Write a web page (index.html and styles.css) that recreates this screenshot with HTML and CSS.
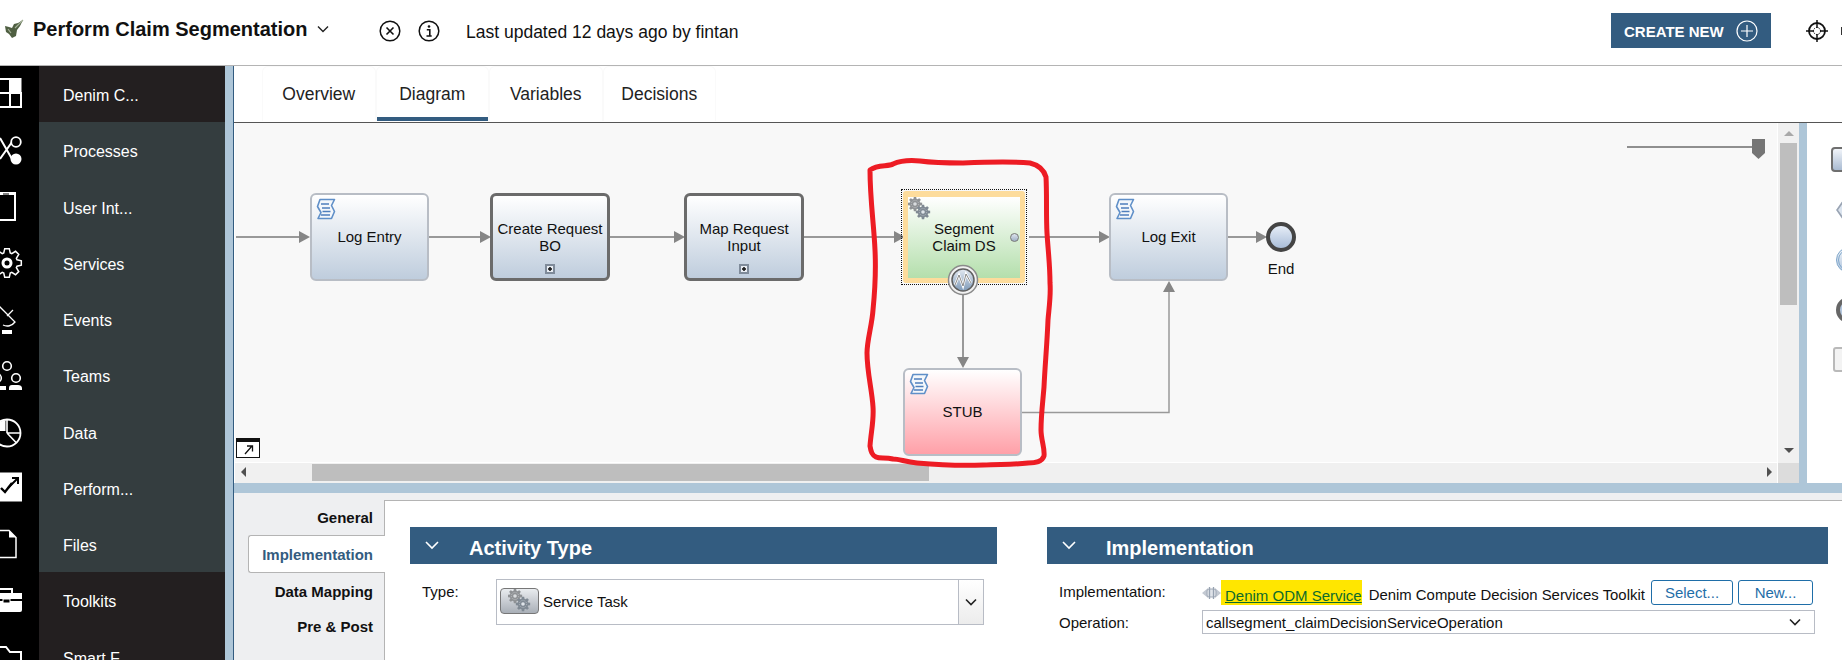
FILE: index.html
```html
<!DOCTYPE html>
<html>
<head>
    <meta charset="UTF-8">
    <title>Perform Claim Segmentation</title>
    <link rel="stylesheet" href="styles.css">
</head>
<body>

    <svg class="defs" width="0" height="0">
        <defs>
            <polygon id="cog" points="9.99,-3.24 14.32,-2.27 14.32,2.27 9.99,3.24 9.36,4.77 11.73,8.52 8.52,11.73 4.77,9.36 3.24,9.99 2.27,14.32 -2.27,14.32 -3.24,9.99 -4.77,9.36 -8.52,11.73 -11.73,8.52 -9.36,4.77 -9.99,3.24 -14.32,2.27 -14.32,-2.27 -9.99,-3.24 -9.36,-4.77 -11.73,-8.52 -8.52,-11.73 -4.77,-9.36 -3.24,-9.99 -2.27,-14.32 2.27,-14.32 3.24,-9.99 4.77,-9.36 8.52,-11.73 11.73,-8.52 9.36,-4.77"/>
            <g id="gears">
                <use href="#cog" transform="translate(7 7) scale(.5)" fill="#8f9295"/>
                <circle cx="7" cy="7" r="3.600" fill="none" stroke="#c4c7ca" stroke-width=".8" stroke-dasharray="1 1"/>
                <circle cx="7" cy="7" r="1.800" fill="#d9dcdf"/>
                <use href="#cog" transform="translate(15 15) scale(.5)" fill="#7f8993"/>
                <circle cx="15" cy="15" r="3.600" fill="none" stroke="#bcc3ca" stroke-width=".8" stroke-dasharray="1 1"/>
                <circle cx="15" cy="15" r="1.800" fill="#dfe4e9"/>
            </g>
            <g id="script">
                <path d="M4 1.500h14.500l-3 6 3 6-3 7H2l3-6-3.500-6z" fill="#f4f7fb" stroke="#5f8fc8" stroke-width="1.600" stroke-linejoin="round"/>
                <path d="M5 6h8M6 10h8M6.500 13.500h8M5 17h9" stroke="#4f7fbd" stroke-width="1.300" fill="none"/>
            </g>
        </defs>
    </svg>

    <header class="topbar">
        <div class="title-group">
            <svg class="logo" width="21" height="22" viewBox="0 0 21 22">
                <path d="M2 8l4 1 3 1 2-4 4-1 5-3-3 6-3 4-1 6-4 2-3-4-3-2z" fill="#4f5f42"/>
                <path d="M12 10l8-8M5 11l3 4" stroke="#a3b097" stroke-width="1.200" fill="none"/>
            </svg>
            <span class="app-title">Perform Claim Segmentation</span>
            <svg class="caret" width="12" height="8" viewBox="0 0 12 8"><path d="M1 1.500l5 5 5-5" fill="none" stroke="#222" stroke-width="1.400"/></svg>
        </div>
        <svg class="round-icon close-icon" width="22" height="22" viewBox="0 0 22 22">
            <circle cx="11" cy="11" r="9.800" fill="none" stroke="#111" stroke-width="1.500"/>
            <path d="M7.500 7.500l7 7M14.500 7.500l-7 7" stroke="#111" stroke-width="1.600"/>
        </svg>
        <svg class="round-icon info-icon" width="22" height="22" viewBox="0 0 22 22">
            <circle cx="11" cy="11" r="9.800" fill="none" stroke="#111" stroke-width="1.500"/>
            <circle cx="11" cy="6.500" r="1.300" fill="#111"/>
            <path d="M8.800 9.800h3v6M8.500 16h5.200" fill="none" stroke="#111" stroke-width="1.600"/>
        </svg>
        <span class="last-updated">Last updated 12 days ago by fintan</span>
        <button class="create-new">
            <span>CREATE NEW</span>
            <svg width="22" height="22" viewBox="0 0 22 22">
                <circle cx="11" cy="11" r="10" fill="none" stroke="#fff" stroke-width="1.200"/>
                <path d="M11 5v12M5 11h12" stroke="#fff" stroke-width="1.200"/>
            </svg>
        </button>
        <svg class="target-icon" width="22" height="22" viewBox="0 0 22 22">
            <circle cx="11" cy="11" r="8" fill="none" stroke="#111" stroke-width="1.800"/>
            <circle cx="11" cy="11" r="3.500" fill="none" stroke="#111" stroke-width="1" stroke-dasharray="1.500 1"/>
            <path d="M11 0v8M11 14v8M0 11h8M14 11h8" stroke="#111" stroke-width="1.500"/>
        </svg>
        <span class="edge-glyph"></span>
    </header>

    <div class="main">
        <div class="rail">
            <div class="rail-item"><svg width="39" height="56" viewBox="0 0 39 56">
                <path d="M-8 13h18v14H-8zM-8 27h18v14H-8zM10 27h11v14H10z" fill="none" stroke="#fff" stroke-width="2"/>
                <rect x="10.500" y="12" width="11" height="14" fill="#fff"/>
            </svg></div>
            <div class="rail-item"><svg width="39" height="56" viewBox="0 0 39 56">
                <path d="M0 16l12 21M0 37l12-17" stroke="#fff" stroke-width="2" fill="none"/>
                <circle cx="16" cy="20" r="4.800" fill="#000" stroke="#fff" stroke-width="1.800"/>
                <circle cx="16" cy="37" r="5.500" fill="#fff"/>
            </svg></div>
            <div class="rail-item"><svg width="39" height="56" viewBox="0 0 39 56">
                <rect x="-8" y="14" width="23" height="27" fill="none" stroke="#fff" stroke-width="2"/>
                <path d="M-8 15h23" stroke="#fff" stroke-width="2"/>
                <path d="M3 15h6" stroke="#000" stroke-width="1"/>
            </svg></div>
            <div class="rail-item"><svg width="39" height="56" viewBox="0 0 39 56">
                <use href="#cog" transform="translate(7 28)" fill="none" stroke="#fff" stroke-width="1.500"/>
                <circle cx="7" cy="28" r="4" fill="none" stroke="#fff" stroke-width="3"/>
            </svg></div>
            <div class="rail-item"><svg width="39" height="56" viewBox="0 0 39 56">
                <path d="M-1 15L15 31c-3 4-8 5-12 3M7 25l6-6" fill="none" stroke="#fff" stroke-width="1.300"/>
                <rect x="2" y="39" width="10" height="4" fill="#fff"/>
            </svg></div>
            <div class="rail-item"><svg width="39" height="56" viewBox="0 0 39 56">
                <circle cx="7" cy="19" r="4.300" fill="none" stroke="#fff" stroke-width="1.600"/>
                <circle cx="-3" cy="31" r="4.300" fill="none" stroke="#fff" stroke-width="1.600"/>
                <circle cx="16" cy="31" r="4.300" fill="none" stroke="#fff" stroke-width="1.600"/>
                <path d="M-4 39h10v4H-4zM9 43v-2c0-2 1-3 3-3h6c2 0 4 1 4 3v2z" fill="#fff"/>
            </svg></div>
            <div class="rail-item"><svg width="39" height="56" viewBox="0 0 39 56">
                <circle cx="7" cy="29" r="13.500" fill="none" stroke="#fff" stroke-width="1.800"/>
                <path d="M7 29V15M7 29h14M7 29l9.500 10" stroke="#fff" stroke-width="1.600" fill="none"/>
                <path d="M-8 27h13.500V16L-8 20z" fill="#fff"/>
            </svg></div>
            <div class="rail-item"><svg width="39" height="56" viewBox="0 0 39 56">
                <rect x="-8" y="12.500" width="30" height="29" fill="#fff"/>
                <path d="M1 28l4 4 7-9" fill="none" stroke="#000" stroke-width="2.400"/>
                <path d="M8 28l9-9M12 18h6v6" fill="none" stroke="#000" stroke-width="2"/>
            </svg></div>
            <div class="rail-item"><svg width="39" height="56" viewBox="0 0 39 56">
                <path d="M-8 14.500H9l7 7v20H-8z" fill="none" stroke="#fff" stroke-width="1.500"/>
                <path d="M9 14.500v7h7z" fill="#fff"/>
            </svg></div>
            <div class="rail-item"><svg width="39" height="56" viewBox="0 0 39 56">
                <path d="M-6 21h28v6H-6z" fill="#fff"/>
                <path d="M-6 29h28v9a2 2 0 0 1-2 2H-6z" fill="#fff"/>
                <path d="M0 17h12v4" fill="none" stroke="#fff" stroke-width="2"/>
                <rect x="3" y="27" width="7" height="4" fill="#000" stroke="#fff"/>
            </svg></div>
            <div class="rail-item"><svg width="39" height="56" viewBox="0 0 39 56">
                <path d="M-8 18H6l4 5h11v30H-8z" fill="none" stroke="#fff" stroke-width="2"/>
            </svg></div>
        </div>

        <nav class="nav">
            <div class="nav-item dark">Denim C...</div>
            <div class="nav-item">Processes</div>
            <div class="nav-item">User Int...</div>
            <div class="nav-item">Services</div>
            <div class="nav-item">Events</div>
            <div class="nav-item">Teams</div>
            <div class="nav-item">Data</div>
            <div class="nav-item">Perform...</div>
            <div class="nav-item">Files</div>
            <div class="nav-item dark">Toolkits</div>
            <div class="nav-item dark">Smart F...</div>
        </nav>

        <div class="strip-v"></div>

        <div class="workspace">
            <div class="tabs">
                <div class="tab">Overview</div>
                <div class="tab active">Diagram</div>
                <div class="tab">Variables</div>
                <div class="tab">Decisions</div>
            </div>

            <div class="editor">
                <div class="canvas-wrap">
                    <div class="canvas">
                        <svg class="edges" width="1542" height="340" viewBox="235 123 1542 340">
                            <g fill="none" stroke="#999" stroke-width="2">
                                <path d="M236 237h66M429 237h54M610 237h66M804 237h92M1029 237h72M1228 237h30"/>
                            </g>
                            <path d="M963 295v64" stroke="#999" stroke-width="2" fill="none"/>
                            <path d="M1022 412.500h147v-125" stroke="#999" stroke-width="1.500" fill="none"/>
                            <g fill="#868686">
                                <path d="M299 231l11 6-11 6zM480 231l11 6-11 6zM674 231l11 6-11 6zM894 231l11 6-11 6zM1099 231l11 6-11 6zM1256 231l11 6-11 6z"/>
                                <path d="M957 357l6 11 6-11zM1163 292l6-11 6 11z"/>
                            </g>
                        </svg>

                        <div class="node script" style="left: 75px; top: 70px"><svg class="node-icon" width="20" height="23" viewBox="0 0 20 23"><use href="#script"/></svg><span>Log Entry</span></div>
                        <div class="node sub" style="left: 255px; top: 70px"><span>Create Request<br>BO</span><i class="sub-marker"></i></div>
                        <div class="node sub" style="left: 449px; top: 70px"><span>Map Request<br>Input</span><i class="sub-marker"></i></div>

                        <div class="selected" style="left: 666px; top: 66px">
                            <div class="service">
                                <svg class="gears" width="24" height="24" viewBox="0 0 24 24"><use href="#gears"/></svg>
                                <span>Segment<br>Claim DS</span>
                                <i class="port"></i>
                            </div>
                        </div>
                        <svg class="boundary" width="32" height="32" viewBox="0 0 32 32" style="left: 712px; top: 141px">
                            <defs>
                                <linearGradient id="bd" x1="0" y1="0" x2="0" y2="1">
                                    <stop offset="0" stop-color="#e4eaf2"/>
                                    <stop offset="1" stop-color="#7f9ab8"/>
                                </linearGradient>
                            </defs>
                            <circle cx="16" cy="16" r="14.500" fill="#f2f2f2" stroke="#8b8b8b" stroke-width="1.500"/>
                            <circle cx="16" cy="16" r="11" fill="url(#bd)" stroke="#5f5f5f" stroke-width="1.500"/>
                            <path d="M8 21l4-10 4 11 3-12 5 9" fill="none" stroke="#fff" stroke-width="2.400"/>
                            <path d="M8 21l4-10 4 11 3-12 5 9" fill="none" stroke="#6b6b6b" stroke-width=".8"/>
                        </svg>

                        <div class="node script" style="left: 874px; top: 70px"><svg class="node-icon" width="20" height="23" viewBox="0 0 20 23"><use href="#script"/></svg><span>Log Exit</span></div>

                        <div class="end-event" style="left: 1031px; top: 99px"></div>
                        <div class="end-label" style="left: 1016px; top: 137px">End</div>

                        <div class="node script stub" style="left: 668px; top: 245px"><svg class="node-icon" width="20" height="23" viewBox="0 0 20 23"><use href="#script"/></svg><span>STUB</span></div>

                        <div class="zoom-slider"><i class="zoom-thumb"></i></div>
                        <div class="expand-btn">
                            <svg width="24" height="20" viewBox="0 0 24 20">
                                <rect x=".5" y=".5" width="23" height="19" fill="#fff" stroke="#111"/>
                                <rect width="24" height="4" fill="#111"/>
                                <path d="M9 16l7-8M11 8h5.500v5.500" fill="none" stroke="#111" stroke-width="1.300"/>
                            </svg>
                        </div>
                    </div>
                    <div class="hscroll">
                        <i class="arrow arrow-left"></i>
                        <i class="hthumb"></i>
                        <i class="arrow arrow-right"></i>
                    </div>

                    <!-- hand drawn red mark, runs over the scrollbar -->
                    <svg class="red-mark" width="1542" height="350" viewBox="235 123 1542 350">
                        <path d="M870 170C878 164 888 167 893 164C902 160 910 160 920 161C935 163 950 163 963 163C985 162 1010 161 1030 163C1038 165 1044 170 1046 177C1047 195 1046 215 1047 233C1048 250 1050 265 1050 283C1051 295 1049 308 1048 320C1047 345 1045 365 1044 387C1043 400 1041 415 1041 430C1041 440 1045 448 1044 456C1042 462 1036 463 1028 463C1010 465 1000 464 983 465C960 466 940 465 917 463C905 462 900 459 893 459C885 457 880 459 876 457C872 455 871 452 870 446C871 432 874 420 873 407C872 390 867 372 867 353C867 340 872 325 873 310C875 290 876 270 875 250C874 225 870 200 870 170Z" fill="none" stroke="#ed1c24" stroke-width="5" stroke-linejoin="round"/>
                    </svg>
                </div>

                <div class="vscroll">
                    <i class="arrow arrow-up"></i>
                    <i class="vthumb"></i>
                    <i class="arrow arrow-down"></i>
                    <i class="corner"></i>
                </div>

                <div class="strip-v"></div>

                <div class="palette">
                    <i class="pal-task"></i>
                    <i class="pal-diamond"></i>
                    <i class="pal-ring"></i>
                    <i class="pal-dark"></i>
                    <i class="pal-note"></i>
                </div>
            </div>

            <div class="strip-h"></div>

            <div class="props">
                <div class="side-tabs">
                    <div class="side-tab">General</div>
                    <div class="side-tab active">Implementation</div>
                    <div class="side-tab">Data Mapping</div>
                    <div class="side-tab">Pre &amp; Post</div>
                </div>
                <div class="props-body">
                    <section class="section activity">
                        <h2 class="section-head"><svg width="14" height="9" viewBox="0 0 14 9"><path d="M1 1l6 6 6-6" fill="none" stroke="#fff" stroke-width="1.600"/></svg>Activity Type</h2>
                        <div class="type-row">
                            <label class="field-label">Type:</label>
                            <div class="select type-select">
                                <span class="type-btn"><svg width="24" height="24" viewBox="0 0 24 24"><use href="#gears"/></svg></span>
                                <span>Service Task</span>
                                <span class="select-drop"><svg width="12" height="8" viewBox="0 0 12 8"><path d="M1 1.500l5 5 5-5" fill="none" stroke="#222" stroke-width="1.600"/></svg></span>
                            </div>
                        </div>
                    </section>
                    <section class="section impl">
                        <h2 class="section-head"><svg width="14" height="9" viewBox="0 0 14 9"><path d="M1 1l6 6 6-6" fill="none" stroke="#fff" stroke-width="1.600"/></svg>Implementation</h2>
                        <div class="impl-row">
                            <label class="field-label">Implementation:</label>
                            <svg class="service-glyph" width="19" height="14" viewBox="0 0 19 14">
                                <path d="M0 7l6-5v10zM19 7l-6-5v10z" fill="#c3c9d2"/>
                                <rect x="5" y="3" width="9" height="8" rx="2" fill="#dfe3e9" stroke="#a0a9b6"/>
                                <path d="M7.500 1v12M11.500 1v12" stroke="#97a2b1" stroke-width="1.300"/>
                            </svg>
                            <a href="#" class="impl-link">Denim ODM Service</a>
                            <span class="toolkit-name">Denim Compute Decision Services Toolkit</span>
                            <button class="small-btn select-btn">Select...</button>
                            <button class="small-btn new-btn">New...</button>
                        </div>
                        <div class="op-row">
                            <label class="field-label">Operation:</label>
                            <div class="select op-select">
                                <span>callsegment_claimDecisionServiceOperation</span>
                                <svg width="12" height="8" viewBox="0 0 12 8"><path d="M1 1.500l5 5 5-5" fill="none" stroke="#222" stroke-width="1.600"/></svg>
                            </div>
                        </div>
                    </section>
                </div>
            </div>
        </div>
    </div>

</body>
</html>
```

FILE: styles.css
```css
* {
    box-sizing: border-box;
}

html, body {
    margin: 0;
    height: 660px;
    overflow: hidden;
}

body {
    background-color: #fff;
    font-family: "Liberation Sans", Arial, sans-serif;
    font-size: 15px;
    color: #111;
}

i {
    display: block;
}

.defs {
    position: absolute;
}

/* top bar */
.topbar {
    display: flex;
    align-items: center;
    height: 66px;
    padding-bottom: 3px;
    border-bottom: 1px solid #b4b4b4;
    overflow: hidden;
}

.title-group {
    display: flex;
    align-items: center;
    width: 379px;
    padding: 0 0 4px 3px;
}

.logo {
    margin-right: 9px;
}

.app-title {
    font-size: 20px;
    font-weight: bold;
}

.caret {
    margin-left: 9px;
}

.info-icon {
    margin-left: 17px;
}

.last-updated {
    margin: 2px 0 0 26px;
    font-size: 17.500px;
}

.create-new {
    display: flex;
    align-items: center;
    justify-content: space-between;
    width: 160px;
    height: 35px;
    margin: -1px 0 0 auto;
    padding: 0 13px;
    border: 0;
    background-color: #335c80;
    color: #fff;
    font-family: inherit;
    font-size: 15px;
    font-weight: bold;
}

.create-new span {
    padding-top: 2px;
}

.target-icon {
    margin-left: 35px;
}

.edge-glyph {
    width: 1px;
    height: 8px;
    margin-left: 13px;
    background-color: #333;
    flex: none;
}

/* left navigation */
.main {
    display: flex;
    height: 594px;
    overflow: hidden;
}

.rail {
    width: 39px;
    flex: none;
    background-color: #000;
}

.rail-item {
    height: 56.250px;
}

.rail-item svg {
    display: block;
    overflow: hidden;
}

.nav {
    width: 186px;
    flex: none;
    background-color: #343d3f;
}

.nav-item {
    display: flex;
    align-items: center;
    height: 56.250px;
    padding: 4px 0 0 24px;
    color: #fff;
    font-size: 16px;
}

.nav-item.dark {
    background-color: #231f20;
}

.strip-v {
    width: 8px;
    flex: none;
    background-color: #aec6d8;
}

.workspace {
    display: flex;
    flex-direction: column;
    flex: 1;
    min-width: 0;
    border-left: 1px solid #335c80;
}

/* diagram tabs */
.tabs {
    display: flex;
    height: 57px;
    padding-left: 28px;
    border-bottom: 1px solid #555;
}

.tab {
    display: flex;
    align-items: center;
    justify-content: center;
    width: 113.500px;
    height: 55px;
    padding-top: 1px;
    border-radius: 6px 6px 0 0;
    border: 1px solid #fafafa;
    border-bottom: 0;
    font-size: 17.500px;
    color: #222;
}

.tab.active {
    box-shadow: inset 0 -4px #335c80;
}

.editor {
    display: flex;
    height: 360px;
}

.canvas-wrap {
    position: relative;
    display: flex;
    flex-direction: column;
    flex: 1;
    min-width: 0;
    padding-left: 1px;
}

.canvas {
    position: relative;
    height: 339px;
    background-color: #f8f8f8;
    overflow: hidden;
}

.edges {
    position: absolute;
    left: 0;
    top: 0;
}

.red-mark {
    position: absolute;
    left: 1px;
    top: 0;
    z-index: 2;
}

.node {
    position: absolute;
    display: flex;
    align-items: center;
    justify-content: center;
    width: 119px;
    height: 88px;
    padding-bottom: 1px;
    text-align: center;
    line-height: 17px;
    border-radius: 6px;
    border: 2px solid #b8bdc5;
    background: linear-gradient(#fff, #bfcddd);
}

.node.sub {
    width: 120px;
    border: 3px solid #6b6b6b;
}

.node.stub {
    background: linear-gradient(#fff, #ffa0a8);
}

.node-icon {
    position: absolute;
    left: 4px;
    top: 3px;
}

.sub-marker {
    position: absolute;
    left: 50%;
    bottom: 4px;
    width: 10px;
    height: 10px;
    margin-left: -5px;
    border: 2px solid #7f8b9a;
    background: radial-gradient(circle, #222 0 1.500px, #e8edf3 2px);
}

.selected {
    position: absolute;
    width: 126px;
    height: 96px;
    padding: 1px;
    border: 1px dotted #111;
}

.service {
    position: relative;
    display: flex;
    align-items: center;
    justify-content: center;
    height: 100%;
    padding-bottom: 2px;
    border: 5px solid #fddc9c;
    border-top-width: 6px;
    border-radius: 3px;
    background: linear-gradient(#fff, #b4dfac);
    background-clip: padding-box;
    text-align: center;
    line-height: 17px;
}

.gears {
    position: absolute;
    left: 0;
    top: 0;
}

.port {
    position: absolute;
    right: 1px;
    top: 36px;
    width: 9px;
    height: 9px;
    border-radius: 50%;
    border: 1px solid #777;
    background: linear-gradient(#dfe5ee, #9fb0c6);
}

.boundary {
    position: absolute;
}

.end-event {
    position: absolute;
    width: 30px;
    height: 30px;
    border-radius: 50%;
    border: 4px solid #444;
    background: linear-gradient(#e6edf7, #a9bdd8);
}

.end-label {
    position: absolute;
    width: 30px;
    margin-left: 15px;
    text-align: center;
}

.zoom-slider {
    position: absolute;
    left: 1392px;
    top: 23px;
    width: 138px;
    height: 2px;
    background-color: #8f8f8f;
}

.zoom-thumb {
    position: absolute;
    right: 0;
    top: -7px;
    width: 13px;
    height: 20px;
    background-color: #757575;
    clip-path: polygon(0 0, 100% 0, 100% 70%, 50% 100%, 0 70%);
}

.expand-btn {
    position: absolute;
    left: 1px;
    top: 315px;
    line-height: 0;
}

/* scrollbars */
.hscroll {
    position: relative;
    height: 20px;
    margin-top: 1px;
    background-color: #f0f0f0;
}

.hthumb {
    position: absolute;
    left: 77px;
    top: 1px;
    width: 617px;
    height: 17px;
    background-color: #bebebe;
}

.arrow {
    position: absolute;
    width: 0;
    height: 0;
    border: 5px solid transparent;
}

.arrow-left {
    left: 6px;
    top: 4px;
    border-left: 0;
    border-right-color: #505050;
}

.arrow-right {
    right: 5px;
    top: 4px;
    border-right: 0;
    border-left-color: #505050;
}

.arrow-up {
    left: 6px;
    top: 8px;
    border-top: 0;
    border-bottom-color: #a8a8a8;
}

.arrow-down {
    left: 6px;
    top: 325px;
    border-bottom: 0;
    border-top-color: #505050;
}

.vscroll {
    position: relative;
    width: 22px;
    flex: none;
    background-color: #f0f0f0;
    border-left: 1px solid #fff;
}

.vthumb {
    position: absolute;
    left: 2px;
    top: 20px;
    width: 17px;
    height: 162px;
    background-color: #bebebe;
}

.corner {
    position: absolute;
    left: 0;
    bottom: 0;
    width: 21px;
    height: 20px;
    background-color: #dcdcdc;
}

/* shape palette, cut by the window edge */
.palette {
    position: relative;
    width: 35px;
    flex: none;
    overflow: hidden;
}

.palette i {
    position: absolute;
}

.pal-task {
    left: 24px;
    top: 24px;
    width: 30px;
    height: 25px;
    border-radius: 4px;
    border: 2px solid #6f6f6f;
    background: linear-gradient(#f2f5fa, #a9bbd2);
}

.pal-diamond {
    left: 29px;
    top: 77px;
    width: 20px;
    height: 20px;
    transform: scaleX(.7) rotate(45deg);
    border: 2px solid #9aa4b3;
    background-color: #dbe4ef;
}

.pal-ring {
    left: 29px;
    top: 124px;
    width: 26px;
    height: 26px;
    border-radius: 50%;
    border: 3px double #7fa7cb;
    background: linear-gradient(#eef3f9, #b5c8df);
}

.pal-dark {
    left: 29px;
    top: 174px;
    width: 26px;
    height: 26px;
    border-radius: 50%;
    border: 4px solid #666;
    background-color: #b5c8df;
}

.pal-note {
    left: 26px;
    top: 224px;
    width: 30px;
    height: 25px;
    border-radius: 3px;
    border: 2px solid #b9b9b9;
    background-color: #f3f3f3;
}

.strip-h {
    height: 10px;
    background-color: #aec6d8;
}

/* properties */
.props {
    display: flex;
    flex: 1;
    min-height: 0;
    padding-top: 7px;
    background-color: #eeeff1;
}

.side-tabs {
    width: 150px;
    flex: none;
    padding: 0 0 0 14px;
}

.side-tab {
    display: flex;
    align-items: center;
    justify-content: flex-end;
    height: 36px;
    padding-right: 11px;
    font-weight: bold;
}

.side-tab:first-child {
    height: 35px;
}

.side-tab:last-child {
    margin-top: -1px;
}

.side-tab.active {
    position: relative;
    z-index: 1;
    height: 38px;
    margin-right: -1px;
    padding-right: 12px;
    background-color: #fff;
    border: 1px solid #b4b4b4;
    border-right: 0;
    border-radius: 3px 0 0 3px;
    color: #335c80;
}

.props-body {
    display: flex;
    flex: 1;
    gap: 50px;
    padding: 26px 14px 0 25px;
    background-color: #fff;
    border-top: 1px solid #b4b4b4;
    border-left: 1px solid #b4b4b4;
}

.section.activity {
    width: 587px;
    flex: none;
}

.section.impl {
    width: 781px;
    flex: none;
}

.section-head {
    display: flex;
    align-items: center;
    height: 37px;
    margin: 0;
    padding: 5px 0 0 15px;
    background-color: #335c80;
    color: #fff;
    font-size: 20px;
}

.section-head svg {
    margin: -6px 30px 0 0;
}

.select {
    display: flex;
    align-items: center;
    background-color: #fff;
    border: 1px solid #b8bcc5;
}

.type-row {
    display: flex;
    align-items: flex-start;
    padding: 15px 0 0 12px;
}

.type-row .field-label {
    width: 74px;
    padding-top: 4px;
}

.type-select {
    position: relative;
    width: 488px;
    height: 46px;
    padding: 0 0 2px 3px;
}

.type-btn {
    display: flex;
    align-items: center;
    justify-content: center;
    width: 39px;
    height: 26px;
    margin-right: 4px;
    border: 1px solid #777;
    border-radius: 4px;
    background: linear-gradient(#e9ecef, #a9afb7);
}

.select-drop {
    position: absolute;
    right: 0;
    top: 0;
    display: flex;
    align-items: center;
    justify-content: center;
    width: 25px;
    height: 100%;
    border-left: 1px solid #b8bcc5;
    background: linear-gradient(#fff, #ececec);
}

.impl-row {
    display: flex;
    align-items: center;
    height: 25px;
    margin-top: 16px;
    padding-left: 12px;
}

.impl-row .field-label {
    width: 143px;
    flex: none;
    margin-bottom: 2px;
}

.service-glyph {
    flex: none;
}

.impl-link {
    display: flex;
    align-items: center;
    height: 25px;
    padding: 5px 0 0 4px;
    background-color: #ffe600;
    color: #0d6b2c;
    white-space: nowrap;
}

.toolkit-name {
    margin-left: 7px;
    padding-top: 5px;
    font-size: 14.900px;
    white-space: nowrap;
}

.small-btn {
    height: 25px;
    padding: 0;
    border: 1px solid #1f6ea8;
    border-radius: 3px;
    background-color: #fff;
    color: #1f6ea8;
    font-family: inherit;
    font-size: 15px;
    flex: none;
}

.select-btn {
    width: 82px;
    margin-left: auto;
}

.new-btn {
    width: 75px;
    margin: 0 15px 0 5px;
}

.op-row {
    display: flex;
    align-items: center;
    margin-top: 5px;
    padding-left: 12px;
}

.op-row .field-label {
    width: 143px;
}

.op-select {
    justify-content: space-between;
    width: 613px;
    height: 24px;
    padding: 0 13px 0 3px;
}
```
